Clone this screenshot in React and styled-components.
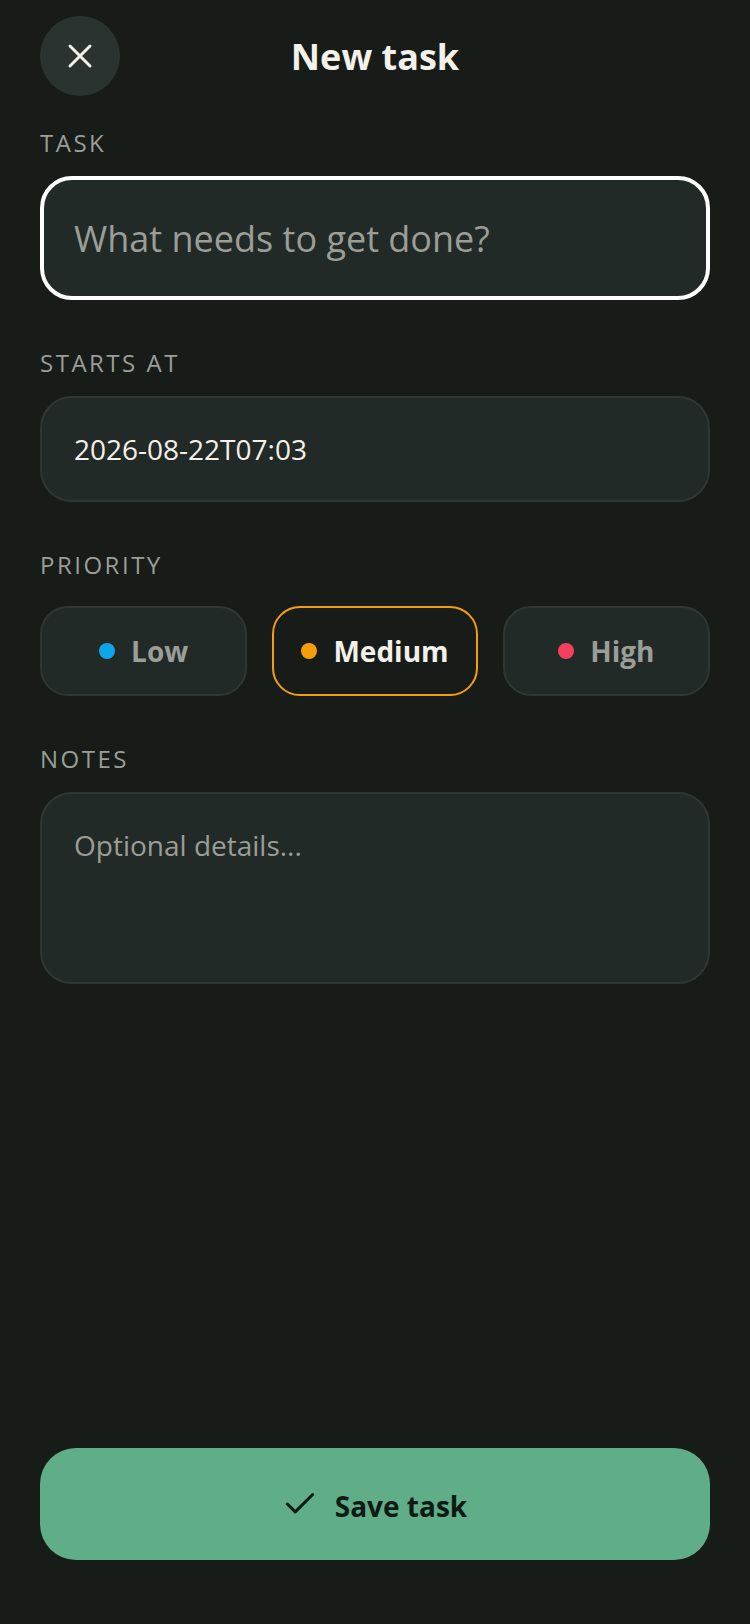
import React from "react";
import styled, { createGlobalStyle } from "styled-components";
import { X, Check } from "lucide-react";

const GlobalStyle = createGlobalStyle`
  html, body {
    margin: 0;
    padding: 0;
    background: #171c19;
  }
  * {
    box-sizing: border-box;
  }
`;

const Screen = styled.div`
  min-height: 100vh;
  display: flex;
  flex-direction: column;
  padding: 16px 40px 64px;
  background: #171c19;
  font-family: "Open Sans", sans-serif;
  color: #f4f1ea;
`;

const Header = styled.header`
  display: grid;
  grid-template-columns: 80px 1fr 80px;
  align-items: center;
  margin-bottom: 32px;
`;

const CloseButton = styled.button`
  width: 80px;
  height: 80px;
  border: none;
  border-radius: 50%;
  padding: 0;
  display: flex;
  align-items: center;
  justify-content: center;
  background: #2b3330;
  color: #f4f1ea;
`;

const Title = styled.h1`
  margin: 0;
  padding-top: 2px;
  text-align: center;
  font-size: 36px;
  line-height: 48px;
  font-weight: 700;
`;

const Field = styled.div`
  display: flex;
  flex-direction: column;
  margin-bottom: 48px;
`;

const Label = styled.label`
  font-size: 24px;
  line-height: 30px;
  letter-spacing: 2.5px;
  color: #9a9e97;
  margin-bottom: ${(p) => p.$gap || 18}px;
`;

const TextInput = styled.input`
  width: 100%;
  height: ${(p) => p.$height}px;
  padding: 0 32px;
  border: 2px solid #2f3734;
  border-radius: 32px;
  outline: none;
  background: #222a27;
  font-family: inherit;
  font-size: ${(p) => p.$size}px;
  color: #f4f1ea;

  &::placeholder {
    color: #9a9e97;
    opacity: 1;
  }
`;

const FocusedInput = styled(TextInput)`
  padding: 0 30px;
  border: 4px solid #ffffff;
`;

const NotesInput = styled.textarea`
  display: block;
  width: 100%;
  height: 192px;
  padding: 31px 32px;
  border: 2px solid #2f3734;
  border-radius: 32px;
  outline: none;
  resize: none;
  background: #222a27;
  font-family: inherit;
  font-size: 28px;
  line-height: 40px;
  color: #f4f1ea;

  &::placeholder {
    color: #9a9e97;
    opacity: 1;
  }
`;

const PriorityRow = styled.div`
  display: grid;
  grid-template-columns: repeat(3, 1fr);
  gap: 24px;
`;

const PriorityChip = styled.button`
  height: 90px;
  margin: 0 ${(p) => (p.$active ? 1 : 0)}px;
  display: flex;
  align-items: center;
  justify-content: center;
  gap: 16px;
  padding: 0;
  border: 2px solid ${(p) => (p.$active ? "#f59e0b" : "#2f3734")};
  border-radius: 28px;
  background: ${(p) => (p.$active ? "#171c19" : "#222a27")};
  font-family: inherit;
  font-size: 28px;
  font-weight: 700;
  color: ${(p) => (p.$active ? "#f4f1ea" : "#9a9e97")};
`;

const Dot = styled.span`
  width: 16px;
  height: 16px;
  border-radius: 50%;
  background: ${(p) => p.$color};
`;

const SaveButton = styled.button`
  margin-top: auto;
  width: 100%;
  height: 112px;
  display: flex;
  align-items: center;
  justify-content: center;
  gap: 16px;
  padding: 0 2px 0 0;
  border: none;
  border-radius: 36px;
  background: #5fae87;
  font-family: inherit;
  font-size: 28px;
  font-weight: 700;
  color: #0f1a15;
`;

const SaveLabel = styled.span`
  padding-top: 3px;
`;

const priorities = [
  { name: "Low", color: "#0ea5e9" },
  { name: "Medium", color: "#f59e0b", active: true },
  { name: "High", color: "#f43f5e" },
];

export default function App() {
  return (
    <Screen>
      <GlobalStyle />
      <Header>
        <CloseButton aria-label="Close">
          <X size={40} strokeWidth={1.8} />
        </CloseButton>
        <Title>New task</Title>
      </Header>

      <Field>
        <Label>TASK</Label>
        <FocusedInput $height={124} $size={36} placeholder="What needs to get done?" />
      </Field>

      <Field>
        <Label>STARTS AT</Label>
        <TextInput $height={106} $size={28} defaultValue="2026-08-22T07:03" />
      </Field>

      <Field>
        <Label $gap={26}>PRIORITY</Label>
        <PriorityRow>
          {priorities.map((p) => (
            <PriorityChip key={p.name} $active={p.active}>
              <Dot $color={p.color} />
              {p.name}
            </PriorityChip>
          ))}
        </PriorityRow>
      </Field>

      <Field>
        <Label>NOTES</Label>
        <NotesInput placeholder="Optional details..." />
      </Field>

      <SaveButton>
        <Check size={38} strokeWidth={1.9} />
        <SaveLabel>Save task</SaveLabel>
      </SaveButton>
    </Screen>
  );
}
